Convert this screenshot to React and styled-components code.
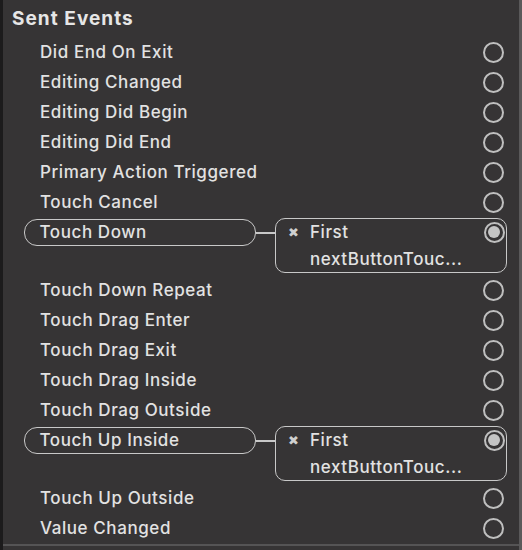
import React from "react";
import styled, { createGlobalStyle } from "styled-components";

const Global = createGlobalStyle`
  html, body { margin: 0; padding: 0; background: #363435; }
  body { width: 522px; height: 550px; overflow: hidden; }
`;

const Panel = styled.div`
  box-sizing: border-box;
  width: 522px;
  height: 550px;
  background: #363435;
  border-left: 3px solid #1c1b1c;
  border-right: 3px solid #5a595a;
  font-family: Inter, "Liberation Sans", sans-serif;
  color: #e2e2e2;
  display: flex;
  flex-direction: column;
`;

const Header = styled.div`
  font-size: 19px;
  font-weight: 700;
  letter-spacing: 1.05px;
  line-height: 22px;
  padding: 8px 0 0 9px;
  height: 37px;
  box-sizing: border-box;
  color: #e6e6e6;
`;

const List = styled.div`
  display: flex;
  flex-direction: column;
  padding: 0 12px 0 21px;
`;

const Row = styled.div`
  display: flex;
  align-items: center;
  height: 30px;
`;

const textStyle = `
  font-size: 17px;
  font-weight: 500;
  letter-spacing: 0.58px;
  white-space: nowrap;
`;

const Label = styled.div`
  ${textStyle}
  padding-left: 16px;
  flex: 1;
`;

const Circle = styled.div`
  box-sizing: border-box;
  width: 21px;
  height: 21px;
  border-radius: 50%;
  border: 2px solid #bfbfbf;
  margin-right: 3px;
  display: flex;
  align-items: center;
  justify-content: center;
  &::after {
    content: "";
    display: ${(p) => (p.$filled ? "block" : "none")};
    width: 12px;
    height: 12px;
    border-radius: 50%;
    background: #c4c4c4;
  }
`;

const ConnRow = styled.div`
  display: flex;
  align-items: flex-start;
  height: 58px;
  padding-top: 1px;
  box-sizing: border-box;
`;

const Pill = styled.div`
  ${textStyle}
  box-sizing: border-box;
  width: 232px;
  height: 27px;
  margin-top: 1px;
  border: 1.5px solid #c8c8c8;
  border-radius: 13px;
  display: flex;
  align-items: center;
  padding-left: 14.5px;
  padding-bottom: 1px;
`;

const Connector = styled.div`
  width: 19px;
  height: 1.5px;
  background: #c8c8c8;
  margin-top: 14px;
`;

const Box = styled.div`
  ${textStyle}
  box-sizing: border-box;
  width: 232px;
  height: 55px;
  border: 1.5px solid #c8c8c8;
  border-radius: 10px;
  display: grid;
  grid-template-columns: 34px 1fr auto;
  grid-template-rows: 26px 27px;
  align-items: center;
`;

const XMark = styled.span`
  font-size: 13px;
  color: #cfcfcf;
  justify-self: center;
  padding-left: 2px;
`;

const Second = styled.div`
  grid-column: 2 / 4;
`;

const BoxCircle = styled(Circle)`
  margin-right: 1.5px;
`;

const Bottom = styled.div`
  margin-top: 1px;
  height: 2px;
  background: #555455;
`;

const events = [
  { name: "Did End On Exit" },
  { name: "Editing Changed" },
  { name: "Editing Did Begin" },
  { name: "Editing Did End" },
  { name: "Primary Action Triggered" },
  { name: "Touch Cancel" },
  { name: "Touch Down", conn: true },
  { name: "Touch Down Repeat" },
  { name: "Touch Drag Enter" },
  { name: "Touch Drag Exit" },
  { name: "Touch Drag Inside" },
  { name: "Touch Drag Outside" },
  { name: "Touch Up Inside", conn: true },
  { name: "Touch Up Outside" },
  { name: "Value Changed" },
];

export default function App() {
  return (
    <>
      <Global />
      <Panel>
        <Header>Sent Events</Header>
        <List>
          {events.map((e) =>
            e.conn ? (
              <ConnRow key={e.name}>
                <Pill>{e.name}</Pill>
                <Connector />
                <Box>
                  <XMark>✖</XMark>
                  <div>First</div>
                  <BoxCircle $filled />
                  <Second>nextButtonTouc...</Second>
                </Box>
              </ConnRow>
            ) : (
              <Row key={e.name}>
                <Label>{e.name}</Label>
                <Circle />
              </Row>
            )
          )}
        </List>
        <Bottom />
      </Panel>
    </>
  );
}
